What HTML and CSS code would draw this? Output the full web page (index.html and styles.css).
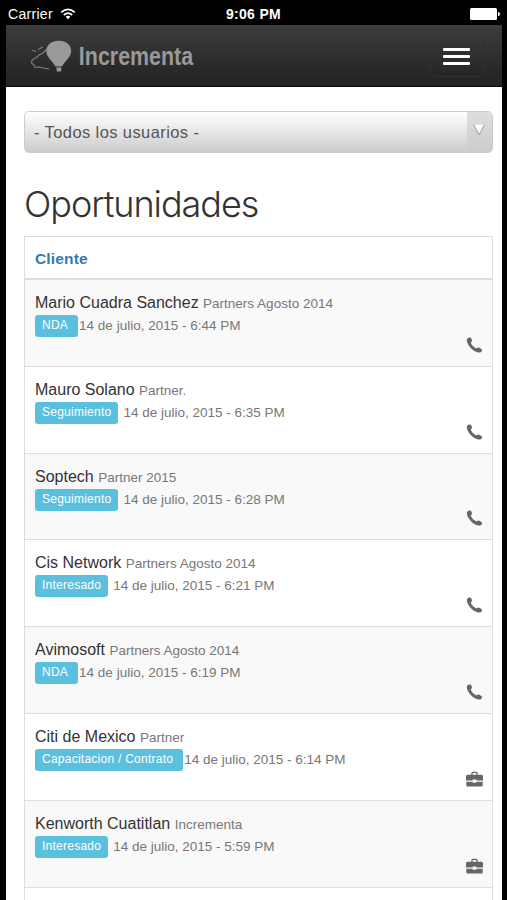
FILE: index.html
```html
<!DOCTYPE html>
<html lang="es">
<head>
  <meta charset="UTF-8" />
  <meta name="viewport" content="width=device-width, initial-scale=1.0"/>
  <title>Incrementa - Oportunidades</title>
  <link rel="stylesheet" href="styles.css">
</head>
<body>
  <svg class="symbols" width="0" height="0">
    <symbol id="phone" viewBox="0 0 16 16">
      <path d="M.9 1.4 Q2 .2 3.8 .5 Q5.500 1.700 5.500 3.600 Q5.200 4.900 4.300 5.500 C5 8 7.700 10.700 10.200 11.500 Q11.200 10.300 12.700 10.700 L15.300 12.300 Q16 13.600 14.700 14.900 C12.400 16.200 8.700 15.200 5.200 12 C1.300 8.200 -.8 3.600 .9 1.400Z"/>
    </symbol>
    <symbol id="briefcase" viewBox="0 0 16 15">
      <path d="M5 3.5 V2.2 Q5 .7 6.5 .7 H9.5 Q11 .7 11 2.2 V3.5 H14.5 Q16 3.5 16 5 V9 H9.7 V8 H6.3 V9 H0 V5 Q0 3.5 1.5 3.5Z M6.2 3.5 H9.8 V2.4 Q9.8 1.9 9.3 1.9 H6.7 Q6.2 1.9 6.2 2.4Z M.3 10 H6.3 V11 H9.7 V10 H15.7 V13.5 Q15.7 14.5 14.7 14.5 H1.3 Q.3 14.5 .3 13.5Z" fill-rule="evenodd"/>
    </symbol>
  </svg>

  <div class="status-bar">
    <div class="carrier">
      <span>Carrier</span>
      <svg width="16" height="12" viewBox="0 0 16 12">
        <path d="M1.2 4.4 Q8 -1.7 14.8 4.4 M3.8 7 Q8 3.3 12.2 7" fill="none" stroke="#fff" stroke-width="1.8"/>
        <path d="M5.6 8.7 Q8 6.9 10.4 8.7 L8 11.3Z" fill="#fff"/>
      </svg>
    </div>
    <div class="time">9:06 PM</div>
    <div class="battery"></div>
  </div>

  <div class="page">
    <nav class="navbar">
      <a class="brand">
        <svg width="48" height="40" viewBox="0 0 48 40">
          <g fill="none" stroke="#808080" stroke-width="1.1">
            <path d="M17 13 L13 17 L9 19 L7 21 L2 24 L1.500 27 L4 29 L5 31.500 L9 31 L13 32 L19 33"/>
            <path d="M2 14 L6 15.500 M8 13.500 L13 11"/>
          </g>
          <path d="M28.800 4.800 C36.500 4.800 41.200 9.500 41.200 15 C41.200 21 35 25 32 30.500 H25.500 C22.500 25 16.300 21 16.300 15 C16.300 9.500 21 4.800 28.800 4.800Z" fill="#999"/>
          <path d="M26.300 31.500 H31.500 L31 35.500 H26.800Z" fill="#999"/>
        </svg>
        <span class="brand-name">Incrementa</span>
      </a>
      <button type="button" class="menu-toggle">
        <span></span>
        <span></span>
        <span></span>
      </button>
    </nav>

    <div class="content">
      <div class="user-select">
        <span class="user-value">- Todos los usuarios -</span>
        <span class="user-arrow">
          <svg width="12" height="12" viewBox="0 0 12 12">
            <path d="M.8 .8 H11.2 L6 11Z" fill="#fff"/>
            <path d="M.8 .8 L6 11 L11.2 .8" fill="none" stroke="#999" stroke-width="1"/>
          </svg>
        </span>
      </div>

      <h1>Oportunidades</h1>

      <div class="list">
        <div class="list-head">Cliente</div>

        <div class="item">
          <div class="client">Mario Cuadra Sanchez <small>Partners Agosto 2014</small></div>
          <div class="info"><span class="label wide">NDA</span><span class="date">14 de julio, 2015 - 6:44 PM</span></div>
          <svg class="icon"><use href="#phone"/></svg>
        </div>
        <div class="item">
          <div class="client">Mauro Solano <small>Partner.</small></div>
          <div class="info"><span class="label">Seguimiento</span><span class="date">14 de julio, 2015 - 6:35 PM</span></div>
          <svg class="icon"><use href="#phone"/></svg>
        </div>
        <div class="item">
          <div class="client">Soptech <small>Partner 2015</small></div>
          <div class="info"><span class="label">Seguimiento</span><span class="date">14 de julio, 2015 - 6:28 PM</span></div>
          <svg class="icon"><use href="#phone"/></svg>
        </div>
        <div class="item">
          <div class="client">Cis Network <small>Partners Agosto 2014</small></div>
          <div class="info"><span class="label">Interesado</span><span class="date">14 de julio, 2015 - 6:21 PM</span></div>
          <svg class="icon"><use href="#phone"/></svg>
        </div>
        <div class="item">
          <div class="client">Avimosoft <small>Partners Agosto 2014</small></div>
          <div class="info"><span class="label wide">NDA</span><span class="date">14 de julio, 2015 - 6:19 PM</span></div>
          <svg class="icon"><use href="#phone"/></svg>
        </div>
        <div class="item">
          <div class="client">Citi de Mexico <small>Partner</small></div>
          <div class="info"><span class="label wide">Capacitacion / Contrato</span><span class="date">14 de julio, 2015 - 6:14 PM</span></div>
          <svg class="icon"><use href="#briefcase"/></svg>
        </div>
        <div class="item">
          <div class="client">Kenworth Cuatitlan <small>Incrementa</small></div>
          <div class="info"><span class="label">Interesado</span><span class="date">14 de julio, 2015 - 5:59 PM</span></div>
          <svg class="icon"><use href="#briefcase"/></svg>
        </div>
        <div class="item"></div>
      </div>
    </div>
  </div>
</body>
</html>
```
FILE: styles.css
```css
* {
  box-sizing: border-box;
}

body {
  margin: 0;
  height: 900px;
  overflow: hidden;
  background: #000;
  font-family: "Liberation Sans", Arial, sans-serif;
  color: #333;
}

.symbols {
  display: none;
}

.status-bar {
  display: grid;
  grid-template-columns: 1fr auto 1fr;
  align-items: center;
  height: 25px;
  padding: 2px 8px 0;
  color: #fff;
  font-size: 14px;
}

.carrier {
  display: flex;
  align-items: center;
  gap: 7px;
  letter-spacing: 0.3px;
}

.time {
  font-weight: bold;
  font-size: 14px;
  letter-spacing: 0.3px;
}

.battery {
  justify-self: end;
  position: relative;
  width: 27px;
  height: 12px;
  margin-right: 2px;
  background: #fff;
  border-radius: 1.5px;
}

.battery::after {
  content: "";
  position: absolute;
  left: 28px;
  top: 4px;
  width: 2px;
  height: 4px;
  background: #fff;
  border-radius: 0 2px 2px 0;
}

.page {
  width: 496px;
  height: 875px;
  margin-left: 6px;
  overflow: hidden;
  background: #fff;
}

.navbar {
  display: flex;
  justify-content: space-between;
  align-items: flex-start;
  height: 62px;
  padding: 11px 18px 0 24px;
  background: linear-gradient(#3c3c3c, #222);
  border-bottom: 1px solid #080808;
}

.brand {
  display: flex;
}

.brand-name {
  padding-left: 1px;
  color: #999;
  font-size: 25px;
  font-weight: bold;
  line-height: 40px;
  transform: scaleX(0.857);
  transform-origin: left;
}

.menu-toggle {
  display: flex;
  flex-direction: column;
  align-items: center;
  gap: 4px;
  width: 54px;
  height: 41px;
  padding: 11px 0 0;
  background: none;
  border: 1px solid #303030;
  border-top-color: transparent;
  border-radius: 6px;
}

.menu-toggle span {
  width: 27px;
  height: 3px;
  margin-right: 1px;
  background: #fff;
  border-radius: 1px;
}

.content {
  padding: 24px 9px 0 18px;
}

.user-select {
  display: flex;
  height: 42px;
  border: 1px solid #ccc;
  border-radius: 5px;
  background: linear-gradient(#fff, #ccc);
  overflow: hidden;
}

.user-value {
  flex: 1;
  padding-left: 9px;
  font-size: 16.5px;
  line-height: 41px;
  letter-spacing: 0.4px;
  color: #555;
}

.user-arrow {
  width: 25px;
  padding: 12px 0 0 6px;
  background: linear-gradient(#dedede, #ccc);
}

.user-arrow svg {
  display: block;
}

h1 {
  margin: 29px 0 10px;
  font-family: Inter, Roboto, sans-serif;
  font-size: 36px;
  font-weight: 300;
  line-height: 44px;
  letter-spacing: -1.05px;
}

.list {
  border: 1px solid #ddd;
}

.list-head {
  height: 43px;
  padding-left: 10px;
  border-bottom: 2px solid #ddd;
  color: #337ab7;
  font-size: 15.5px;
  font-weight: bold;
  line-height: 43px;
  letter-spacing: 0.15px;
}

.item {
  position: relative;
  height: 86.8px;
  padding: 12px 10px 0;
  border-bottom: 1px solid #ddd;
}

.item:nth-child(even) {
  background: #f9f9f9;
}

.client {
  font-size: 16px;
  line-height: 21px;
}

.client small {
  font-size: 13.5px;
  color: #777;
}

.info {
  display: flex;
  margin-top: 1px;
}

.label {
  height: 22px;
  margin-right: 5px;
  padding: 0 7px;
  background: #5bc0de;
  border-radius: 3px;
  color: #fff;
  font-size: 12px;
  line-height: 21px;
  letter-spacing: 0.25px;
}

.label.wide {
  margin-right: 1px;
  padding-right: 10px;
}

.date {
  font-size: 13.5px;
  line-height: 21px;
  color: #777;
}

.icon {
  position: absolute;
  right: 9px;
  bottom: 13px;
  width: 17px;
  height: 16px;
  fill: #666;
}
```
